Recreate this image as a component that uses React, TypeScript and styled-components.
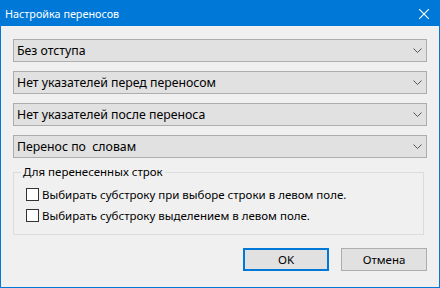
import React from "react";
import styled, { createGlobalStyle } from "styled-components";

const Global = createGlobalStyle`
  html, body { margin: 0; padding: 0; background: #f0f0f0; }
  body { font-family: "Noto Sans", "Open Sans", sans-serif; font-size: 11.5px; color: #000; }
`;

const Window = styled.div`
  width: 440px;
  height: 288px;
  box-sizing: border-box;
  border: 1px solid #0078d7;
  border-top: none;
  background: #f0f0f0;
  display: flex;
  flex-direction: column;
`;

const TitleBar = styled.div`
  height: 26px;
  margin: 0 -1px;
  background: #0078d7;
  color: #fff;
  display: flex;
  align-items: center;
  padding-left: 5px;
  font-size: 10.8px;
  flex-shrink: 0;
`;

const TitleText = styled.span`
  flex: 1;
`;

const CloseBtn = styled.div`
  width: 32px;
  height: 26px;
  display: flex;
  align-items: center;
  justify-content: center;
  padding-top: 2px;
  box-sizing: border-box;
`;

const Body = styled.div`
  flex: 1;
  padding: 13px 12px 0 12px;
  display: flex;
  flex-direction: column;
`;

const Combos = styled.div`
  display: flex;
  flex-direction: column;
  gap: 9px;
`;

const Combo = styled.div`
  height: 23px;
  box-sizing: border-box;
  border: 1px solid #adadad;
  background: #e1e1e1;
  display: flex;
  align-items: center;
  padding: 0 4px 0 3px;
  font-size: 12.3px;
`;

const ComboText = styled.span`
  flex: 1;
  white-space: pre;
`;

const Group = styled.fieldset`
  margin: 7px 3px 0 0;
  padding: 8px 0 0 12px;
  border: 1px solid #dcdcdc;
  height: 70px;
  box-sizing: border-box;
  display: flex;
  flex-direction: column;
  gap: 7px;
`;

const Legend = styled.legend`
  padding: 0 2px;
  margin-left: -5px;
  line-height: 14px;
`;

const CheckRow = styled.label`
  display: flex;
  align-items: center;
  gap: 3px;
  height: 14px;
`;

const Box = styled.span`
  width: 13px;
  height: 13px;
  box-sizing: border-box;
  border: 1px solid #333;
  background: #fff;
  flex-shrink: 0;
`;

const Buttons = styled.div`
  display: flex;
  justify-content: flex-end;
  gap: 12px;
  margin-top: 13px;
`;

const Button = styled.div<{ $primary?: boolean }>`
  width: 86px;
  height: 23px;
  box-sizing: border-box;
  background: #e1e1e1;
  border: ${(p) => (p.$primary ? "2px solid #0078d7" : "1px solid #adadad")};
  display: flex;
  align-items: center;
  justify-content: center;
`;

const Chevron = () => (
  <svg width="9" height="5" viewBox="0 0 9 5">
    <path d="M0.5 0.5 L4.5 4.5 L8.5 0.5" fill="none" stroke="#555" strokeWidth="1" />
  </svg>
);

const combos = [
  "Без отступа",
  "Нет указателей перед переносом",
  "Нет указателей после переноса",
  "Перенос по  словам",
];

export default function App() {
  return (
    <>
      <Global />
      <Window>
        <TitleBar>
          <TitleText>Настройка переносов</TitleText>
          <CloseBtn>
            <svg width="10" height="10" viewBox="0 0 10 10">
              <path d="M0 0 L10 10 M10 0 L0 10" stroke="#fff" strokeWidth="1.1" />
            </svg>
          </CloseBtn>
        </TitleBar>
        <Body>
          <Combos>
            {combos.map((c) => (
              <Combo key={c}>
                <ComboText>{c}</ComboText>
                <Chevron />
              </Combo>
            ))}
          </Combos>
          <Group>
            <Legend>Для перенесенных строк</Legend>
            <CheckRow>
              <Box />
              Выбирать субстроку при выборе строки в левом поле.
            </CheckRow>
            <CheckRow>
              <Box />
              Выбирать субстроку выделением в левом поле.
            </CheckRow>
          </Group>
          <Buttons>
            <Button $primary>OK</Button>
            <Button>Отмена</Button>
          </Buttons>
        </Body>
      </Window>
    </>
  );
}
